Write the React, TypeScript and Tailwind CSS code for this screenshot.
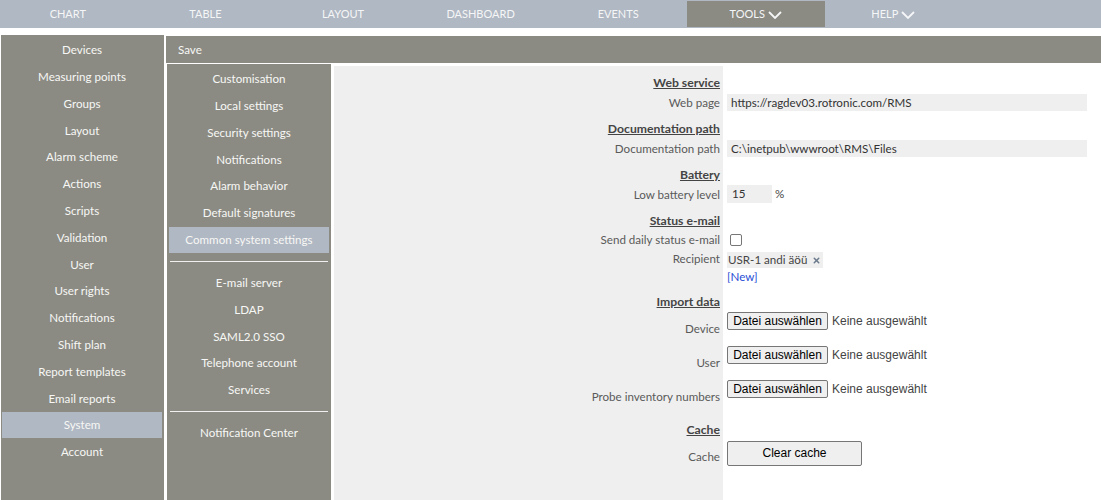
import { ReactNode } from "react";
import { X } from "lucide-react";

const topNav = ["CHART", "TABLE", "LAYOUT", "DASHBOARD", "EVENTS", "TOOLS", "HELP"];
const mainMenu = [
  "Devices",
  "Measuring points",
  "Groups",
  "Layout",
  "Alarm scheme",
  "Actions",
  "Scripts",
  "Validation",
  "User",
  "User rights",
  "Notifications",
  "Shift plan",
  "Report templates",
  "Email reports",
  "System",
  "Account",
];
const subMenuGroups = [
  ["Customisation", "Local settings", "Security settings", "Notifications", "Alarm behavior", "Default signatures", "Common system settings"],
  ["E-mail server", "LDAP", "SAML2.0 SSO", "Telephone account", "Services"],
  ["Notification Center"],
];

function MenuItem({ label, active }: { label: string; active?: boolean }) {
  return (
    <div className={`h-[26px] mb-[0.8px] flex items-center justify-center text-[#f7f7f5] ${active ? "bg-[#b0b8c3]" : ""}`}>
      {label}
    </div>
  );
}

function Chevron() {
  return (
    <svg width="14" height="8" viewBox="0 0 14 8" fill="none" stroke="#f5f6f7" strokeWidth="1.8" className="mt-px">
      <polyline points="1,1 7,7 13,1" />
    </svg>
  );
}

function Row({ className, labelClass, label, heading, children }: { className: string; labelClass: string; label?: string; heading?: boolean; children?: ReactNode }) {
  return (
    <div className={`flex ${className}`}>
      <div className={`w-[389px] shrink-0 bg-[#efefef] pr-[3px] text-right leading-4 ${labelClass} ${heading ? "font-bold underline text-[#444] text-[12.2px]" : "text-[#5a5a5a]"}`}>
        {label}
      </div>
      <div className="pl-1 flex-1 min-w-0">{children}</div>
    </div>
  );
}

function FileButton() {
  return (
    <div className="flex items-center gap-1 font-['Liberation_Sans',sans-serif] text-xs">
      <button className="w-[101px] h-[18px] flex items-center justify-center border border-[#767676] bg-[#efefef] rounded-[2px] text-black">
        Datei auswählen
      </button>
      <span className="text-[#444]">Keine ausgewählt</span>
    </div>
  );
}

export default function App() {
  return (
    <div className="w-[1101px] h-[500px] overflow-hidden bg-white font-['Lato',sans-serif] text-[11.6px] flex flex-col">
      <nav className="h-7 shrink-0 bg-[#b0b8c3] flex -ml-px text-[11px]">
        {topNav.map((item) => {
          const hasMenu = item === "TOOLS" || item === "HELP";
          return (
            <div
              key={item}
              className={`w-[137.6px] shrink-0 my-px flex items-center justify-center gap-[3px] text-[#f5f6f7] ${item === "TOOLS" ? "bg-[#8b8b83]" : ""}`}
            >
              {item}
              {hasMenu && <Chevron />}
            </div>
          );
        })}
      </nav>
      <div className="flex-1 flex pt-[7px] pl-px min-h-0">
        <aside className="w-[163px] shrink-0 bg-[#8b8b83] pt-0.5 pl-px pr-0.5">
          {mainMenu.map((item) => (
            <MenuItem key={item} label={item} active={item === "System"} />
          ))}
        </aside>
        <div className="flex-1 flex flex-col pl-0.5 pt-px min-w-0">
          <div className="h-[27px] shrink-0 bg-[#8b8b83] text-[#f7f7f5] flex items-center pl-3">Save</div>
          <div className="flex-1 flex pt-px pl-px min-h-0">
            <div className="w-[164px] shrink-0 bg-[#8b8b83] pt-0.5 px-0.5">
              {subMenuGroups.map((group, i) => (
                <div key={i}>
                  {i > 0 && <div className="h-px bg-[#f0f0ee] mx-px mt-2 mb-2" />}
                  {group.map((item) => (
                    <MenuItem key={item} label={item} active={item === "Common system settings"} />
                  ))}
                </div>
              ))}
            </div>
            <main className="flex-1 flex flex-col pl-[3px] pt-0.5 min-w-0">
              <Row className="h-[28px]" labelClass="pt-[9px]" label="Web service" heading />
              <Row className="h-[26px]" labelClass="pt-px" label="Web page">
                <div className="w-[360px] h-[17px] bg-[#efefef] pl-[4px] leading-[18px] text-[#333]">https://ragdev03.rotronic.com/RMS</div>
              </Row>
              <Row className="h-[20px]" labelClass="pt-px" label="Documentation path" heading />
              <Row className="h-[26px]" labelClass="pt-px" label="Documentation path">
                <div className="w-[360px] h-[17px] bg-[#efefef] pl-[4px] leading-[18px] text-[#333]">C:\inetpub\wwwroot\RMS\Files</div>
              </Row>
              <Row className="h-[19px]" labelClass="pt-px" label="Battery" heading />
              <Row className="h-[27px]" labelClass="pt-0.5" label="Low battery level">
                <div className="flex gap-[3px] text-[#444]">
                  <div className="w-[45px] h-[18px] bg-[#efefef] pl-[5px] leading-[18px] text-[#333]">15</div>
                  <span className="leading-[18px]">%</span>
                </div>
              </Row>
              <Row className="h-[20px]" labelClass="pt-px" label="Status e-mail" heading />
              <Row className="h-[20px]" labelClass="pt-0" label="Send daily status e-mail">
                <div className="pt-0.5 pl-[3px]">
                  <div className="w-3 h-3 border border-[#767676] rounded-[2px] bg-white" />
                </div>
              </Row>
              <Row className="h-[17px]" labelClass="-mt-px" label="Recipient">
                <div className="w-[96px] h-4 bg-[#efefef] flex items-center justify-between pl-px pr-0.5 text-[#444] whitespace-nowrap">
                  USR-1 andi äöü
                  <X size={9} strokeWidth={4} className="text-[#6b7a8c]" />
                </div>
              </Row>
              <Row className="h-[24px]" labelClass="">
                <span className="text-[#2a4fd6] leading-4 block">[New]</span>
              </Row>
              <Row className="h-[19px]" labelClass="pt-px" label="Import data" heading />
              <Row className="h-[34px]" labelClass="pt-[9px]" label="Device">
                <FileButton />
              </Row>
              <Row className="h-[34px]" labelClass="pt-[9px]" label="User">
                <FileButton />
              </Row>
              <Row className="h-[41px]" labelClass="pt-[9px]" label="Probe inventory numbers">
                <FileButton />
              </Row>
              <Row className="h-[20px]" labelClass="pt-px" label="Cache" heading />
              <Row className="flex-1" labelClass="pt-2" label="Cache">
                <button className="w-[135px] h-[25px] pb-px border border-[#767676] bg-[#efefef] rounded-[2px] text-black font-['Liberation_Sans',sans-serif] text-xs">
                  Clear cache
                </button>
              </Row>
            </main>
          </div>
        </div>
      </div>
    </div>
  );
}
